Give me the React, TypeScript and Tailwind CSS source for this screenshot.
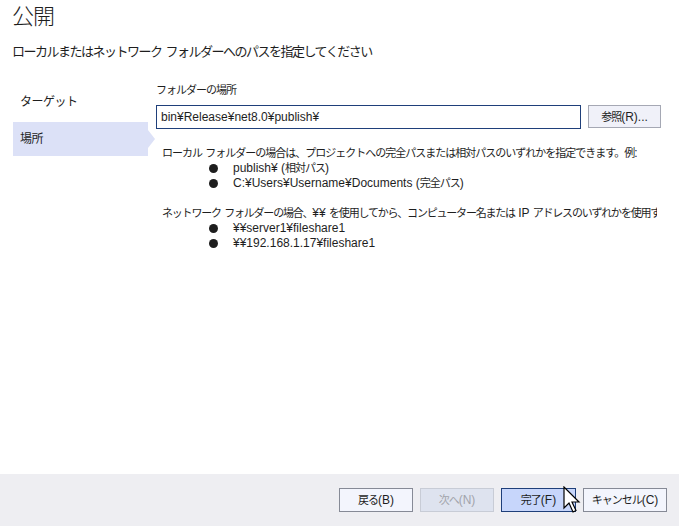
import React from 'react';

const font = { fontFamily: '"Liberation Sans", "Noto Sans CJK JP", sans-serif' };

const navItems = [
    { name: 'ターゲット', key: 'target' },
    { name: '場所', key: 'location' },
];

// 日本語部分だけ詰めて表示 (Meiryo UI の幅に近づける)
const J = ({ text, cjk = 'text-[11px] tracking-[-1px]' }: { text: string; cjk?: string }) => (
    <>
        {text.split(/([\u3000-\u30ff\u4e00-\u9fff\uff00-\uffef]+)/).map((part, i) =>
            i % 2 === 1 ? (
                <span key={i} className={cjk}>{part}</span>
            ) : (
                <span key={i}>{part}</span>
            )
        )}
    </>
);

const Bullet = ({ text }: { text: string }) => (
    <div className="flex items-center h-[15px]">
        <span className="ml-[47px] w-[9px] h-[9px] rounded-full bg-[#1e1e1e]" />
        <span className="ml-[15px]"><J text={text} /></span>
    </div>
);

const FooterButton = ({ label, width, variant }: { label: string; width: string; variant?: 'primary' | 'disabled' }) => (
    <button
        className={`${width} h-[24px] text-[12px] border ${variant === 'primary'
            ? 'bg-[#c7d6fb] border-[#1f3f7a] text-[#1e1e1e]'
            : variant === 'disabled'
                ? 'bg-[#dee3ef] border-[#c8ccd6] text-[#a2a4ab]'
                : 'bg-[#f3f5fd] border-[#868a96] text-[#1e1e1e]'
            }`}
    >
        <J text={label} />
    </button>
);

export default function App() {
    const activeKey = 'location';
    return (
        <div className="w-[679px] h-[526px] bg-white flex flex-col text-[#1e1e1e] overflow-hidden" style={font}>
            {/* ヘッダー */}
            <div className="pl-[12px] pt-[2px]">
                <div className="text-[22px] leading-[30px] font-light"><J text="公開" cjk="text-[22px] tracking-[-1px]" /></div>
                <div className="text-[14px] leading-[20px] mt-[9px]">
                    <J text="ローカルまたはネットワーク フォルダーへのパスを指定してください" cjk="text-[13px] tracking-[-1.5px]" />
                </div>
            </div>

            {/* 本体 */}
            <div className="flex flex-1 mt-[21px]">
                {/* 左ナビ */}
                <div className="w-[156px] pl-[13px] pt-[2px] shrink-0">
                    {navItems.map((item, idx) => (
                        <div key={item.key} className={`relative ${idx > 0 ? 'mt-[3px]' : ''}`}>
                            <div
                                className={`w-[135px] h-[34px] pl-[7px] flex items-center text-[12px] ${activeKey === item.key ? 'bg-[#dce1f7]' : ''}`}
                            >
                                <J text={item.name} cjk="text-[12px] tracking-[-0.5px]" />
                            </div>
                            {activeKey === item.key && (
                                <span className="absolute left-[135px] top-[8px] w-0 h-0 border-y-[9px] border-y-transparent border-l-[7px] border-l-[#dce1f7]" />
                            )}
                        </div>
                    ))}
                </div>

                {/* 右コンテンツ */}
                <div className="flex-1 text-[12px]">
                    <div className="leading-[16px] -mt-[1px]"><J text="フォルダーの場所" /></div>
                    <div className="flex mt-[7px]">
                        <div className="w-[425px] h-[24px] shrink-0 border border-[#1f3f7a] flex items-center pl-[4px]">
                            bin¥Release¥net8.0¥publish¥
                        </div>
                        <button className="ml-[7px] w-[73px] h-[23px] shrink-0 bg-[#f0f1f9] border border-[#a5a8b4] text-[12px]">
                            <J text="参照(R)..." />
                        </button>
                    </div>

                    <div className="w-[501px] overflow-hidden pl-[6px] mt-[17px] leading-[15px] whitespace-nowrap">
                        <div><J text="ローカル フォルダーの場合は、プロジェクトへの完全パスまたは相対パスのいずれかを指定できます。例:" /></div>
                        <Bullet text="publish¥ (相対パス)" />
                        <Bullet text="C:¥Users¥Username¥Documents (完全パス)" />
                        <div className="mt-[15px]">
                            <J
                                text="ネットワーク フォルダーの場合、¥¥ を使用してから、コンピューター名または IP アドレスのいずれかを使用する必要があります。例:"
                                cjk="text-[11px] tracking-[-1.2px]"
                            />
                        </div>
                        <Bullet text="¥¥server1¥fileshare1" />
                        <Bullet text="¥¥192.168.1.17¥fileshare1" />
                    </div>
                </div>
            </div>

            {/* フッター */}
            <div className="h-[52px] bg-[#eeeef2] flex items-center justify-end pr-[12px] gap-[7px] relative">
                <FooterButton label="戻る(B)" width="w-[74px]" />
                <FooterButton label="次へ(N)" width="w-[74px]" variant="disabled" />
                <FooterButton label="完了(F)" width="w-[75px]" variant="primary" />
                <FooterButton label="キャンセル(C)" width="w-[84px]" />
                {/* マウスカーソル */}
                <svg className="absolute left-[563px] top-[12px]" width="20" height="30" viewBox="0 0 20 30">
                    <path d="M1 1 L1 22 L6 17 L10 26 L13 24.5 L9 16 L16 16 Z" fill="#fff" stroke="#000" strokeWidth="1.2" strokeLinejoin="miter" />
                </svg>
            </div>
        </div>
    );
}
